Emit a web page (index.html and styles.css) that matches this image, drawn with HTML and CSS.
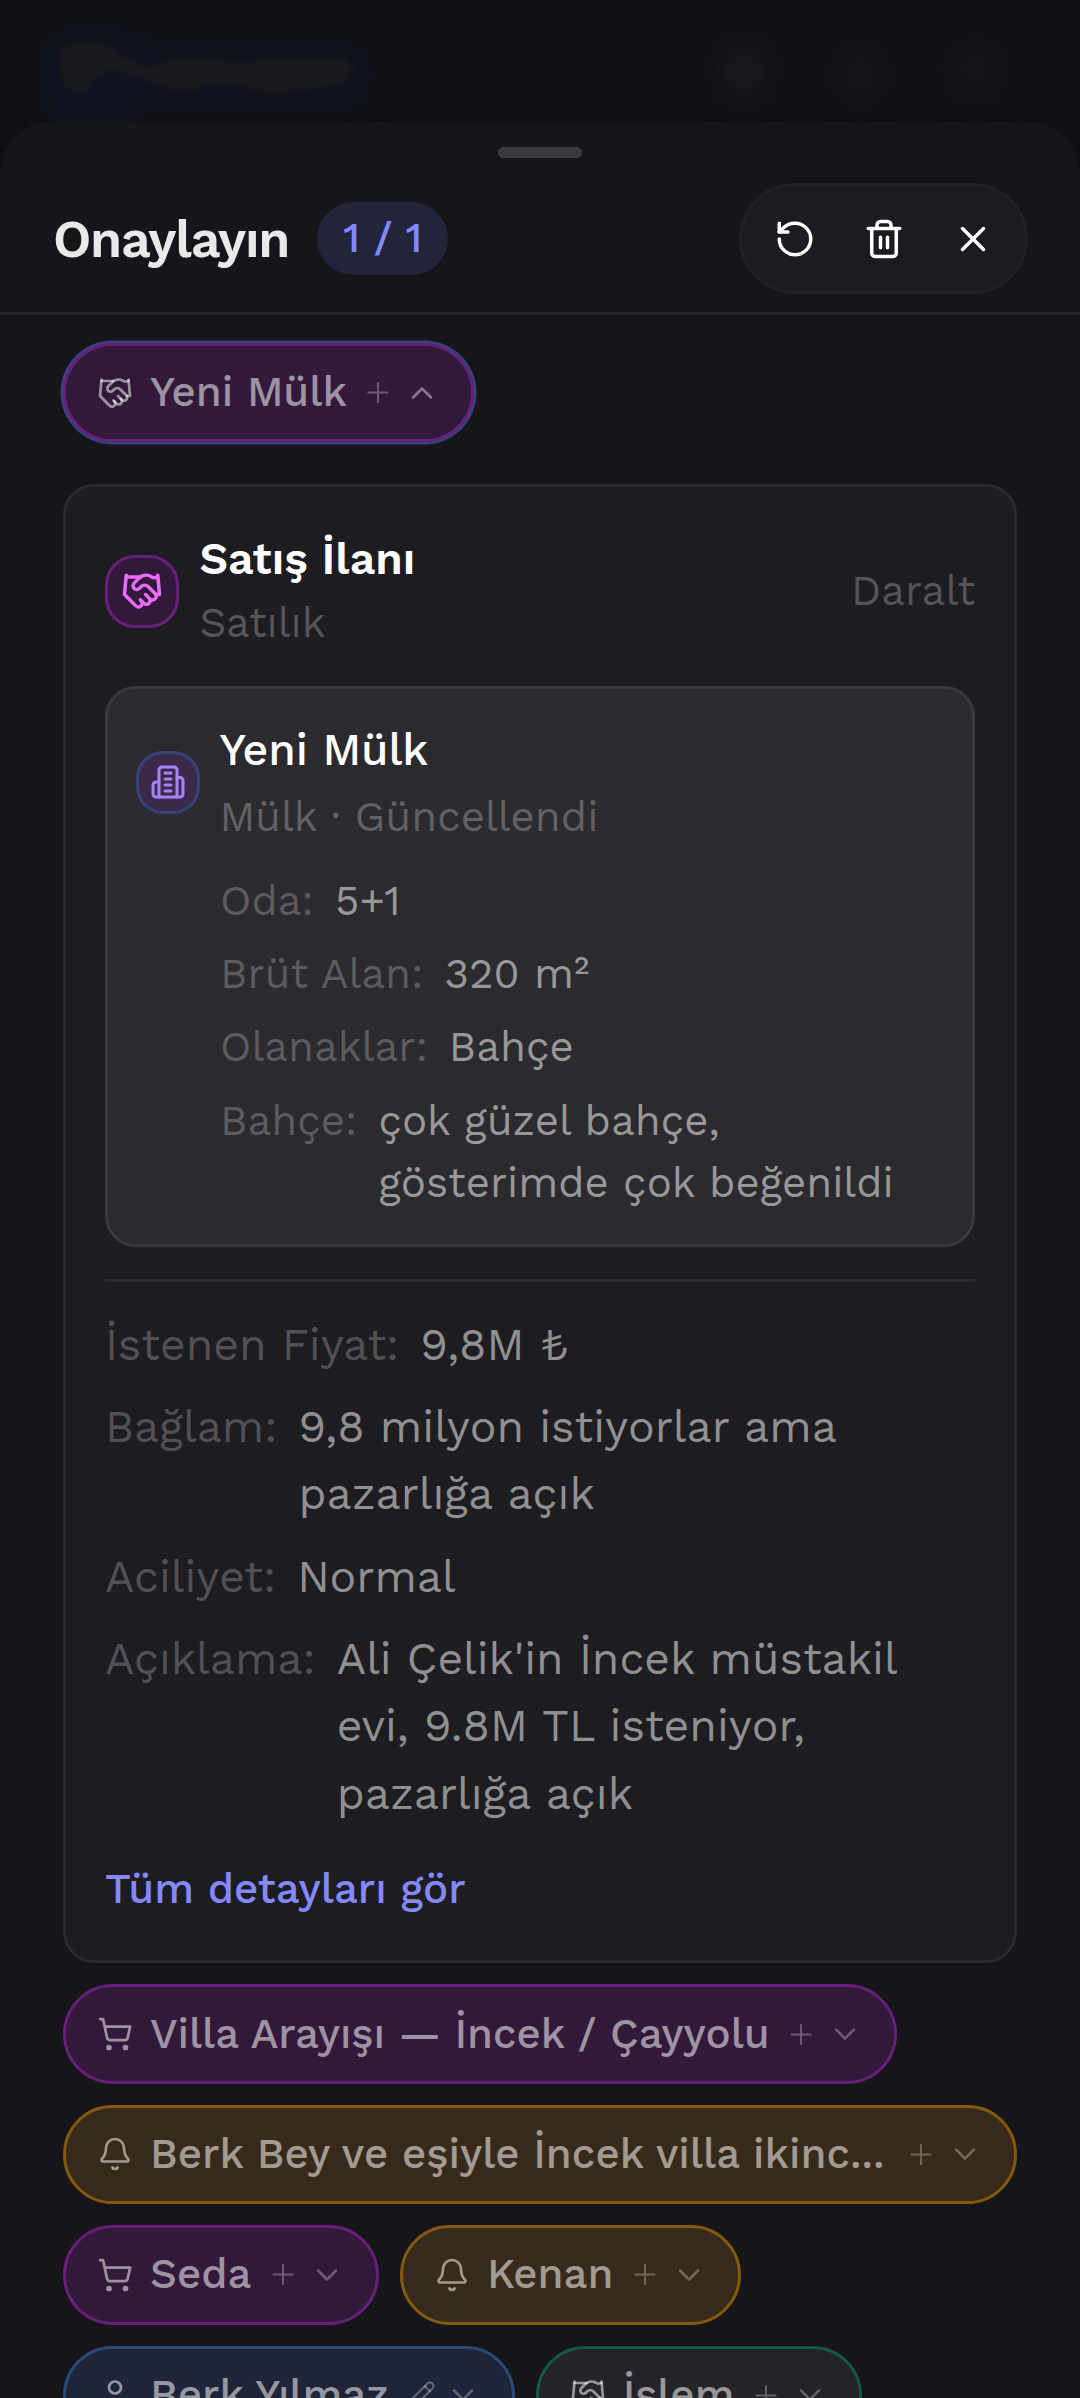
FILE: index.html
```html
<!DOCTYPE html>
<html lang="tr">
<head>
<meta charset="utf-8">
<title>Onaylayın</title>
<link rel="stylesheet" href="styles.css">
</head>
<body>
<svg class="defs" aria-hidden="true">
  <symbol id="handshake" viewBox="0 0 24 24"><path d="m11 17 2 2a1 1 0 1 0 3-3"/><path d="m14 14 2.5 2.5a1 1 0 1 0 3-3l-3.88-3.88a3 3 0 0 0-4.24 0l-.88.88a1 1 0 1 1-3-3l2.81-2.81a5.79 5.79 0 0 1 7.06-.87l.47.28a2 2 0 0 0 1.42.25L21 4"/><path d="m21 3 1 11h-2"/><path d="M3 3 2 14l6.5 6.5a1 1 0 1 0 3-3"/><path d="M3 4h8"/></symbol>
  <symbol id="cart" viewBox="0 0 24 24"><circle cx="8" cy="21" r="1"/><circle cx="19" cy="21" r="1"/><path d="M2.05 2.05h2l2.66 12.42a2 2 0 0 0 2 1.58h9.78a2 2 0 0 0 1.95-1.57l1.65-7.43H5.12"/></symbol>
  <symbol id="bell" viewBox="0 0 24 24"><path d="M10.268 21a2 2 0 0 0 3.464 0"/><path d="M3.262 15.326A1 1 0 0 0 4 17h16a1 1 0 0 0 .74-1.673C19.41 13.956 18 12.499 18 8A6 6 0 0 0 6 8c0 4.499-1.411 5.956-2.738 7.326"/></symbol>
  <symbol id="user" viewBox="0 0 24 24"><path d="M19 21v-2a4 4 0 0 0-4-4H9a4 4 0 0 0-4 4v2"/><circle cx="12" cy="7" r="4"/></symbol>
  <symbol id="building" viewBox="0 0 24 24"><path d="M6 22V4a2 2 0 0 1 2-2h8a2 2 0 0 1 2 2v18Z"/><path d="M6 12H4a2 2 0 0 0-2 2v6a2 2 0 0 0 2 2h2"/><path d="M18 9h2a2 2 0 0 1 2 2v9a2 2 0 0 1-2 2h-2"/><path d="M10 6h4M10 10h4M10 14h4M10 18h4"/></symbol>
  <symbol id="pencil" viewBox="0 0 24 24"><path d="M21.174 6.812a1 1 0 0 0-3.986-3.987L3.842 16.174a2 2 0 0 0-.5.83l-1.321 4.352a.5.5 0 0 0 .623.622l4.353-1.32a2 2 0 0 0 .83-.497z"/><path d="m15 5 4 4"/></symbol>
  <symbol id="plus" viewBox="0 0 24 24"><path d="M5 12h14M12 5v14"/></symbol>
  <symbol id="down" viewBox="0 0 24 24"><path d="m6 9 6 6 6-6"/></symbol>
  <symbol id="up" viewBox="0 0 24 24"><path d="m18 15-6-6-6 6"/></symbol>
  <symbol id="undo" viewBox="0 0 24 24"><path d="M3 12a9 9 0 1 0 9-9 9.75 9.75 0 0 0-6.74 2.74L3 8"/><path d="M3 3v5h5"/></symbol>
  <symbol id="trash" viewBox="0 0 24 24"><path d="M3 6h18M19 6v14a2 2 0 0 1-2 2H7a2 2 0 0 1-2-2V6M8 6V4a2 2 0 0 1 2-2h4a2 2 0 0 1 2 2v2M10 11v6M14 11v6"/></symbol>
  <symbol id="close" viewBox="0 0 24 24"><path d="M18 6 6 18M6 6l12 12"/></symbol>
</svg>

<div class="screen">
  <div class="backdrop">
    <svg width="1080" height="170" viewBox="0 0 1080 170">
      <defs>
        <filter id="wide" x="-30%" y="-60%" width="160%" height="220%" color-interpolation-filters="sRGB"><feGaussianBlur stdDeviation="14"/></filter>
        <filter id="soft" color-interpolation-filters="sRGB"><feGaussianBlur stdDeviation="2"/></filter>
      </defs>
      <g filter="url(#wide)">
        <path fill="#121424" d="M48 36h80l30 14h205v52H130v20H48z"/>
        <ellipse cx="744" cy="71" rx="24" ry="30" fill="#1b1b20"/>
        <ellipse cx="860" cy="73" rx="22" ry="25" fill="#19191f"/>
        <ellipse cx="975" cy="71" rx="24" ry="27" fill="#19171b"/>
      </g>
      <path filter="url(#soft)" fill="#19181c" d="M60 50Q72 41 88 42 108 42 125 57 138 66 150 66L175 58 255 62 268 58H345Q353 62 353 68 353 82 335 86L270 94 230 83 205 83Q198 92 185 91 165 90 140 77L110 70Q98 72 84 93L65 88Q57 66 60 50z"/>
    </svg>
  </div>

  <main class="sheet">
    <div class="handle"></div>
    <header class="header">
      <h1 class="title">Onaylayın</h1>
      <span class="badge">1 / 1</span>
      <div class="actions">
        <button class="action"><svg><use href="#undo"/></svg></button>
        <button class="action"><svg><use href="#trash"/></svg></button>
        <button class="action"><svg><use href="#close"/></svg></button>
      </div>
    </header>

    <div class="content">
      <div class="chip purple active"><svg class="kind"><use href="#handshake"/></svg><span>Yeni Mülk</span><svg class="plus"><use href="#plus"/></svg><svg class="chevron"><use href="#up"/></svg></div>

      <section class="card">
        <div class="card-head">
          <span class="avatar pink"><svg><use href="#handshake"/></svg></span>
          <div class="names">
            <h2 class="name strong">Satış İlanı</h2>
            <p class="sub">Satılık</p>
          </div>
          <span class="collapse">Daralt</span>
        </div>

        <div class="panel">
          <div class="panel-head">
            <span class="avatar small violet"><svg><use href="#building"/></svg></span>
            <div class="names">
              <h3 class="name">Yeni Mülk</h3>
              <p class="sub">Mülk · Güncellendi</p>
            </div>
          </div>
          <dl class="facts">
            <div class="fact"><dt>Oda:</dt><dd>5+1</dd></div>
            <div class="fact"><dt>Brüt Alan:</dt><dd>320 m²</dd></div>
            <div class="fact"><dt>Olanaklar:</dt><dd>Bahçe</dd></div>
            <div class="fact"><dt>Bahçe:</dt><dd>çok güzel bahçe,<br>gösterimde çok beğenildi</dd></div>
          </dl>
        </div>

        <hr class="divider">

        <dl class="facts large">
          <div class="fact"><dt>İstenen Fiyat:</dt><dd>9,8M ₺</dd></div>
          <div class="fact"><dt>Bağlam:</dt><dd>9,8 milyon istiyorlar ama<br>pazarlığa açık</dd></div>
          <div class="fact"><dt>Aciliyet:</dt><dd>Normal</dd></div>
          <div class="fact"><dt>Açıklama:</dt><dd>Ali Çelik'in İncek müstakil<br>evi, 9.8M TL isteniyor,<br>pazarlığa açık</dd></div>
        </dl>
        <a class="more">Tüm detayları gör</a>
      </section>

      <div class="chip purple snug"><svg class="kind"><use href="#cart"/></svg><span>Villa Arayışı — İncek / Çayyolu</span><svg class="plus"><use href="#plus"/></svg><svg class="chevron"><use href="#down"/></svg></div>
      <div class="chip gold full"><svg class="kind"><use href="#bell"/></svg><span>Berk Bey ve eşiyle İncek villa ikinc...</span><svg class="plus"><use href="#plus"/></svg><svg class="chevron"><use href="#down"/></svg></div>
      <div class="chip purple"><svg class="kind"><use href="#cart"/></svg><span>Seda</span><svg class="plus"><use href="#plus"/></svg><svg class="chevron"><use href="#down"/></svg></div>
      <div class="chip gold"><svg class="kind"><use href="#bell"/></svg><span>Kenan</span><svg class="plus"><use href="#plus"/></svg><svg class="chevron"><use href="#down"/></svg></div>
      <div class="chip blue"><svg class="kind"><use href="#user"/></svg><span>Berk Yılmaz</span><svg class="edit"><use href="#pencil"/></svg><svg class="chevron"><use href="#down"/></svg></div>
      <div class="chip green"><svg class="kind"><use href="#handshake"/></svg><span>İşlem</span><svg class="plus"><use href="#plus"/></svg><svg class="chevron"><use href="#down"/></svg></div>
    </div>
  </main>
</div>
</body>
</html>
```
FILE: styles.css
```css
* { box-sizing: border-box; margin: 0; padding: 0; }

body {
  background: #0f1014;
  color: #fff;
  font-family: "Work Sans", Inter, "Noto Sans", sans-serif;
  font-size: 42px;
  line-height: 63px;
  overflow: hidden;
}

svg { display: block; flex: none; fill: none; stroke: currentColor; stroke-width: 2; stroke-linecap: round; stroke-linejoin: round; }
.defs { position: absolute; width: 0; height: 0; }

.screen { height: 2398px; overflow: hidden; display: grid; grid-template-rows: 121px 1fr; }
.backdrop svg { stroke: none; }

.sheet { position: relative; height: 2277px; overflow: hidden; background: #16151a; border-radius: 54px 54px 0 0; padding-top: 26px; }
.handle { width: 84px; height: 11px; margin: 0 auto; border-radius: 6px; background: #3a393f; }

.header { display: flex; align-items: center; padding: 25px 52px 18px 53px; border-bottom: 3px solid #26252a; }
.title { padding-top: 3px; font-size: 52px; font-weight: 600; line-height: 72px; letter-spacing: -1.25px; color: #e8e9e9; }
.badge { margin-left: 28px; width: 131px; height: 73px; border-radius: 37px; background: #222439; color: #8489ff; font-weight: 500; line-height: 72px; text-align: center; }
.actions { margin-left: auto; width: 289px; height: 111px; padding: 0 8px; border: 3px solid #212025; border-radius: 56px; background: #1c1b1f; display: flex; align-items: center; }
.action { flex: 1; height: 90px; border: 0; background: none; color: #fff; display: flex; align-items: center; justify-content: center; }
.action svg { width: 42px; height: 42px; }

.content { display: flex; flex-wrap: wrap; gap: 21px; padding: 28px 63px; }

.chip { height: 99.4px; padding: 0 31px; border: 3px solid; border-radius: 50px; display: flex; align-items: center; font-weight: 500; white-space: nowrap; }
.chip span { margin: 0 13px 0 17px; padding-bottom: 2px; color: rgba(255, 255, 255, 0.53); }
.snug span { letter-spacing: -0.07px; }
.full { width: 100%; }
.full span { flex: 1; }
.kind { width: 36px; height: 36px; color: rgba(255, 255, 255, 0.53); stroke-width: 1.8; }
.plus { width: 36px; height: 33px; color: rgba(255, 255, 255, 0.29); stroke-width: 1.4; }
.edit { width: 36px; height: 30px; margin-left: 1px; color: rgba(255, 255, 255, 0.29); stroke-width: 1.8; }
.chevron { width: 36px; height: 36px; margin-left: 8.5px; color: rgba(255, 255, 255, 0.29); stroke-width: 1.7; }
.edit + .chevron { margin-left: 6px; }
.active .chevron { color: rgba(255, 255, 255, 0.42); }
.purple { background: #32193a; border-color: #671f7a; }
.active { box-shadow: 0 0 0 2.5px #35427c; }
.gold { background: #382a1a; border-color: #86590f; }
.blue { background: #202438; border-color: #2c4a78; }
.green { background: #242428; border-color: #14584c; }

.card { width: 954px; height: 1479px; margin-top: 21px; padding: 39px; border: 3px solid #2a292e; border-radius: 31px; background: #1d1c21; }
.card-head { display: flex; align-items: center; height: 130px; }
.avatar { flex: none; width: 73.5px; height: 73.5px; border: 3px solid #661f7a; border-radius: 30px; background: #32193a; display: flex; align-items: center; justify-content: center; }
.avatar svg { width: 42px; height: 42px; }
.pink { color: #ed6aff; }
.violet { color: #a684ff; border-color: #35427c; background: #3a2a47; }
.avatar.small { width: 63.5px; height: 63.5px; border-radius: 27px; }
.avatar.small svg { width: 36px; height: 36px; }
.names { margin-left: 21px; }
.card-head .names { padding-bottom: 1px; }
.small + .names { margin-left: 20px; }
.name { font-size: 44.55px; font-weight: 500; line-height: 66px; }
.card-head .name { line-height: 64px; }
.panel .sub { margin-top: 2px; }
.strong { font-weight: 600; }
.sub, .collapse { color: #555458; }
.collapse { margin-left: auto; padding-bottom: 1px; }

.panel { margin-top: 29.5px; height: 561px; padding: 28px; border: 3px solid #39383d; border-radius: 31px; background: #2b2a2e; }
.panel-head { display: flex; align-items: center; height: 131px; }
.panel .sub { color: #616064; }

.facts { display: grid; gap: 10.6px; }
.fact { display: flex; gap: 21px; }
.fact dt { flex: none; color: #5c5b5f; }
.fact dd { color: #999898; white-space: nowrap; }
.panel .facts { margin: 22px 0 0 84px; line-height: 62.7px; }
.divider { margin: 32px 0 0; border: 0; height: 3px; background: #2b2a2f; }
.large { margin-top: 30px; gap: 14.6px; font-size: 44.55px; line-height: 67.5px; }
.large dt { color: #515054; }
.large dd { color: #919091; }
.more { display: block; margin-top: 29px; color: #8489ff; font-weight: 500; }
```
